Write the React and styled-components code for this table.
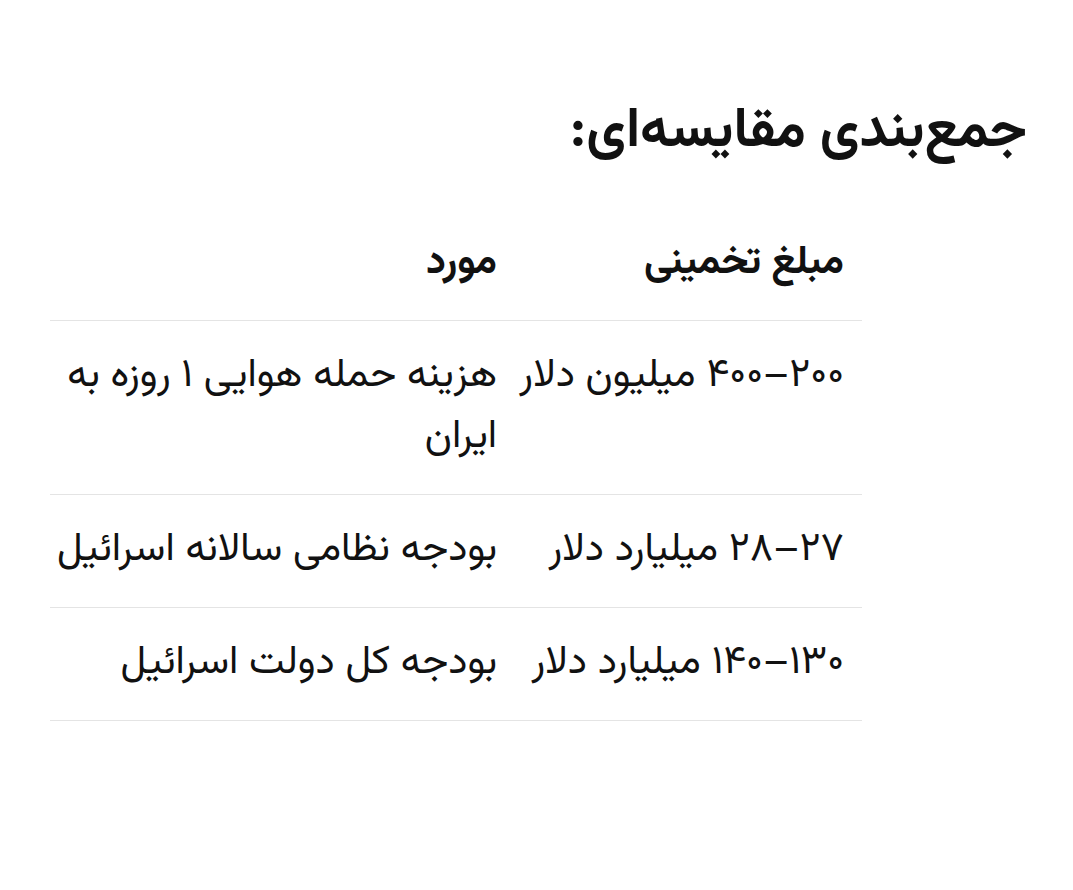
import React from "react";
import styled, { createGlobalStyle } from "styled-components";

const Global = createGlobalStyle`
  html, body { margin: 0; padding: 0; background: #ffffff; }
  body {
    font-family: "Vazirmatn", "Noto Sans Arabic", "DejaVu Sans", sans-serif;
    color: #111111;
  }
`;

const Page = styled.div`
  width: 1073px;
  min-height: 890px;
  box-sizing: border-box;
  padding: 100px 46px 0 50px;
`;

const Heading = styled.h2`
  direction: rtl;
  text-align: right;
  margin: 0 0 42px 0;
  font-size: 55px;
  line-height: 66px;
  font-weight: 700;
`;

const Table = styled.table`
  direction: ltr;
  border-collapse: collapse;
  width: 812px;
  table-layout: fixed;
`;

const Col = styled.col`
  width: ${(p) => p.$w}px;
`;

const Row = styled.tr`
  border-bottom: 1.5px solid #e4e4e4;
`;

const Cell = styled.td`
  direction: rtl;
  text-align: right;
  vertical-align: top;
  padding: 25px 18px 26px 0;
  font-size: 40px;
  line-height: 61px;
  font-weight: ${(p) => (p.$head ? 700 : 400)};
`;

const rows = [
  ["هزینه حمله هوایی ۱ روزه به ایران", "۲۰۰–۴۰۰ میلیون دلار"],
  ["بودجه نظامی سالانه اسرائیل", "۲۷–۲۸ میلیارد دلار"],
  ["بودجه کل دولت اسرائیل", "۱۳۰–۱۴۰ میلیارد دلار"],
];

export default function App() {
  return (
    <Page>
      <Global />
      <Heading>جمع‌بندی مقایسه‌ای:</Heading>
      <Table>
        <colgroup>
          <Col $w={465} />
          <Col $w={347} />
        </colgroup>
        <thead>
          <Row>
            <Cell as="th" $head>مورد</Cell>
            <Cell as="th" $head>مبلغ تخمینی</Cell>
          </Row>
        </thead>
        <tbody>
          {rows.map(([item, amount]) => (
            <Row key={item}>
              <Cell>{item}</Cell>
              <Cell>{amount}</Cell>
            </Row>
          ))}
        </tbody>
      </Table>
    </Page>
  );
}
